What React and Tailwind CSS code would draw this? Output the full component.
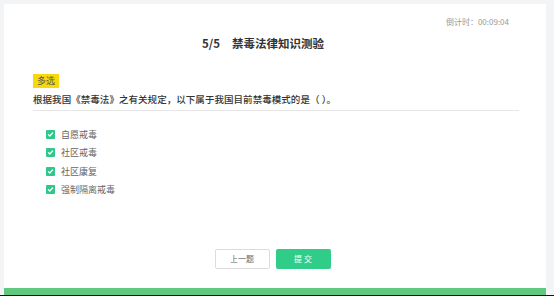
import React from "react";

const options = ["自愿戒毒", "社区戒毒", "社区康复", "强制隔离戒毒"];

const Check = () => (
  <span className="flex h-[9px] w-[9px] items-center justify-center rounded-[1px] bg-[#2fc88a]">
    <svg viewBox="0 0 10 10" className="h-[7px] w-[7px]" fill="none" stroke="white" strokeWidth="1.8" strokeLinecap="round" strokeLinejoin="round">
      <path d="M2 5.2l2 2 4-4.4" />
    </svg>
  </span>
);

export default function App() {
  return (
    <div
      className="flex h-[296px] w-[554px] flex-col bg-[#f3f4f6] pl-1 pr-[8px] pt-1"
      style={{ fontFamily: '"Noto Sans CJK SC", "Noto Sans", sans-serif' }}
    >
      <div className="flex flex-1 flex-col bg-white px-[29px]">
        {/* Header */}
        <div className="flex justify-end pt-[13px] pr-[8px] text-[8px] leading-[10px] text-[#999]">
          倒计时：00:09:04
        </div>
        <div className="mt-[6px] flex justify-center pr-[24px] text-[11.5px] font-bold leading-[20px] text-[#333]">
          <span>5/5</span>
          <span className="ml-[12px]">禁毒法律知识测验</span>
        </div>

        {/* Question */}
        <div className="mt-[12px]">
          <span className="inline-block bg-[#f7d80a] px-[4px] text-[9px] leading-[14px] text-[#555]">多选</span>
        </div>
        <div className="mr-[-2px] mt-[4px] border-b border-[#e6e6e6] pb-[4px] text-[9.5px] font-medium leading-[13px] tracking-[0.05px] text-[#333]">
          根据我国《禁毒法》之有关规定，以下属于我国目前禁毒模式的是（ ）。
        </div>

        {/* Options */}
        <div className="mt-[17px] flex flex-col gap-[6px] pl-[13px]">
          {options.map((o) => (
            <div key={o} className="flex h-[12.5px] items-center gap-[6px] text-[9px] text-[#666]">
              <Check />
              <span>{o}</span>
            </div>
          ))}
        </div>

        {/* Buttons */}
        <div className="mt-auto mb-[19px] flex justify-center gap-[6px] pr-[5px]">
          <button className="h-[20px] w-[55px] rounded-[2px] border border-[#dcdcdc] bg-white text-[8px] text-[#666]">
            上一题
          </button>
          <button className="h-[20px] w-[55px] rounded-[2px] bg-[#2fcd88] text-[8px] text-white">
            提 交
          </button>
        </div>
      </div>
      <div className="h-[7px] bg-[#5ec97f]" />
      <div className="ml-[-4px] mr-[-8px] h-[1px] bg-[#111]" />
    </div>
  );
}
